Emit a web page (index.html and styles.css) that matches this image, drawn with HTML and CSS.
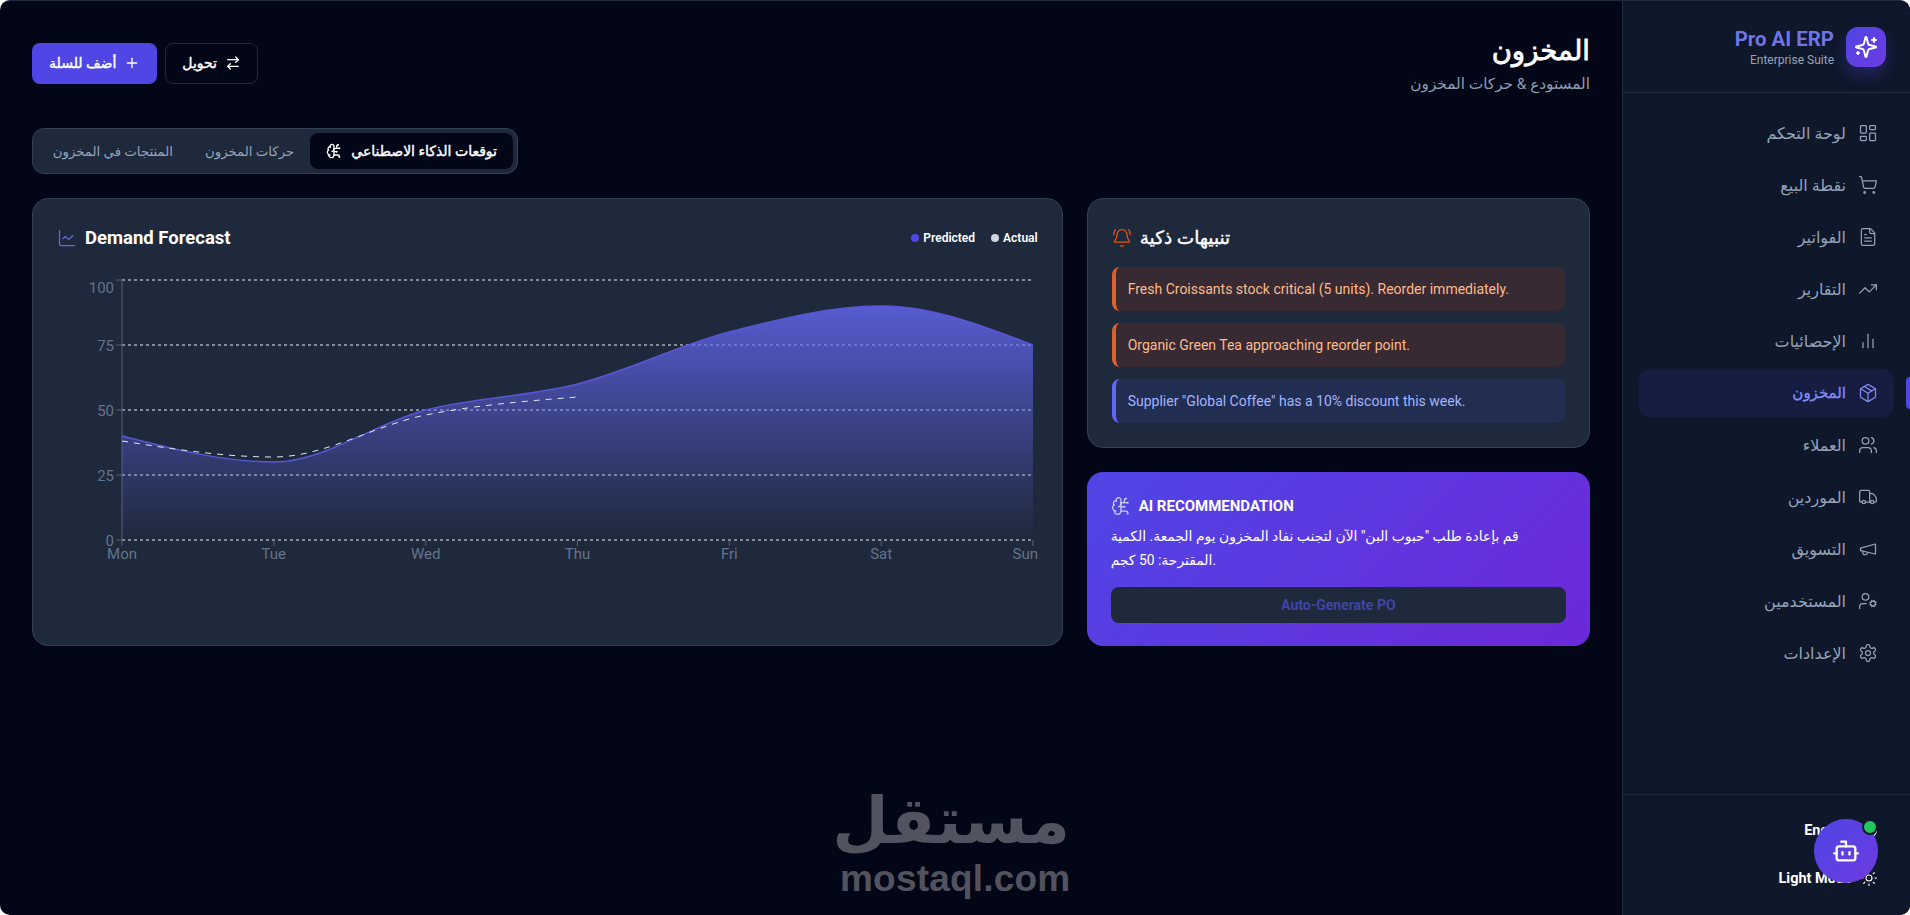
FILE: index.html
```html
<!DOCTYPE html>
<html lang="ar" dir="rtl">
<head>
  <meta charset="UTF-8" />
  <title>Pro AI ERP - المخزون</title>
  <link rel="stylesheet" href="styles.css">
</head>
<body>
  <svg class="sprite" xmlns="http://www.w3.org/2000/svg">
    <symbol id="i-dashboard" viewBox="0 0 24 24"><rect x="3" y="3" width="7" height="9" rx="1"/><rect x="14" y="3" width="7" height="5" rx="1"/><rect x="14" y="12" width="7" height="9" rx="1"/><rect x="3" y="16" width="7" height="5" rx="1"/></symbol>
    <symbol id="i-cart" viewBox="0 0 24 24"><circle cx="8" cy="21" r="1"/><circle cx="19" cy="21" r="1"/><path d="M2.05 2.05h2l2.66 12.42a2 2 0 0 0 2 1.58h9.78a2 2 0 0 0 1.95-1.57l1.65-7.43H5.12"/></symbol>
    <symbol id="i-file" viewBox="0 0 24 24"><path d="M15 2H6a2 2 0 0 0-2 2v16a2 2 0 0 0 2 2h12a2 2 0 0 0 2-2V7Z"/><path d="M14 2v4a2 2 0 0 0 2 2h4"/><path d="M10 9H8"/><path d="M16 13H8"/><path d="M16 17H8"/></symbol>
    <symbol id="i-trending" viewBox="0 0 24 24"><polyline points="22 7 13.5 15.5 8.5 10.5 2 17"/><polyline points="16 7 22 7 22 13"/></symbol>
    <symbol id="i-bars" viewBox="0 0 24 24"><path d="M18 20V10"/><path d="M12 20V4"/><path d="M6 20v-6"/></symbol>
    <symbol id="i-package" viewBox="0 0 24 24"><path d="M11 21.73a2 2 0 0 0 2 0l7-4A2 2 0 0 0 21 16V8a2 2 0 0 0-1-1.73l-7-4a2 2 0 0 0-2 0l-7 4A2 2 0 0 0 3 8v8a2 2 0 0 0 1 1.73z"/><path d="M12 22V12"/><path d="m3.3 7 7.703 4.734a2 2 0 0 0 1.994 0L20.7 7"/><path d="m7.5 4.27 9 5.15"/></symbol>
    <symbol id="i-users" viewBox="0 0 24 24"><path d="M16 21v-2a4 4 0 0 0-4-4H6a4 4 0 0 0-4 4v2"/><circle cx="9" cy="7" r="4"/><path d="M22 21v-2a4 4 0 0 0-3-3.87"/><path d="M16 3.13a4 4 0 0 1 0 7.75"/></symbol>
    <symbol id="i-truck" viewBox="0 0 24 24"><path d="M14 18V6a2 2 0 0 0-2-2H4a2 2 0 0 0-2 2v11a1 1 0 0 0 1 1h2"/><path d="M15 18H9"/><path d="M19 18h2a1 1 0 0 0 1-1v-3.65a1 1 0 0 0-.22-.624l-3.48-4.35A1 1 0 0 0 17.52 8H14"/><circle cx="17" cy="18" r="2"/><circle cx="7" cy="18" r="2"/></symbol>
    <symbol id="i-megaphone" viewBox="0 0 24 24"><path d="m3 11 18-5v12L3 14v-3z"/><path d="M11.6 16.8a3 3 0 1 1-5.8-1.6"/></symbol>
    <symbol id="i-usercog" viewBox="0 0 24 24"><circle cx="18" cy="15" r="3"/><circle cx="9" cy="7" r="4"/><path d="M10 15H6a4 4 0 0 0-4 4v2"/><path d="m21.7 16.4-.9-.3"/><path d="m15.2 13.9-.9-.3"/><path d="m16.6 18.7.3-.9"/><path d="m19.1 12.2.3-.9"/><path d="m19.6 18.7-.4-1"/><path d="m16.8 12.3-.4-1"/><path d="m14.3 16.6 1-.4"/><path d="m20.7 13.8 1-.4"/></symbol>
    <symbol id="i-settings" viewBox="0 0 24 24"><path d="M12.22 2h-.44a2 2 0 0 0-2 2v.18a2 2 0 0 1-1 1.73l-.43.25a2 2 0 0 1-2 0l-.15-.08a2 2 0 0 0-2.73.73l-.22.38a2 2 0 0 0 .73 2.73l.15.1a2 2 0 0 1 1 1.72v.51a2 2 0 0 1-1 1.74l-.15.09a2 2 0 0 0-.73 2.73l.22.38a2 2 0 0 0 2.73.73l.15-.08a2 2 0 0 1 2 0l.43.25a2 2 0 0 1 1 1.73V20a2 2 0 0 0 2 2h.44a2 2 0 0 0 2-2v-.18a2 2 0 0 1 1-1.73l.43-.25a2 2 0 0 1 2 0l.15.08a2 2 0 0 0 2.73-.73l.22-.39a2 2 0 0 0-.73-2.73l-.15-.08a2 2 0 0 1-1-1.74v-.5a2 2 0 0 1 1-1.74l.15-.09a2 2 0 0 0 .73-2.73l-.22-.38a2 2 0 0 0-2.73-.73l-.15.08a2 2 0 0 1-2 0l-.43-.25a2 2 0 0 1-1-1.73V4a2 2 0 0 0-2-2z"/><circle cx="12" cy="12" r="3"/></symbol>
    <symbol id="i-sparkles" viewBox="0 0 24 24"><path d="M9.937 15.5A2 2 0 0 0 8.5 14.063l-6.135-1.582a.5.5 0 0 1 0-.962L8.5 9.936A2 2 0 0 0 9.937 8.5l1.582-6.135a.5.5 0 0 1 .963 0L14.063 8.5A2 2 0 0 0 15.5 9.937l6.135 1.581a.5.5 0 0 1 0 .964L15.5 14.063a2 2 0 0 0-1.437 1.437l-1.582 6.135a.5.5 0 0 1-.963 0z"/><path d="M20 3v4"/><path d="M22 5h-4"/><path d="M4 17v2"/><path d="M5 18H3"/></symbol>
    <symbol id="i-transfer" viewBox="0 0 24 24"><path d="m16 3 4 4-4 4"/><path d="M20 7H4"/><path d="m8 21-4-4 4-4"/><path d="M4 17h16"/></symbol>
    <symbol id="i-plus" viewBox="0 0 24 24"><path d="M5 12h14"/><path d="M12 5v14"/></symbol>
    <symbol id="i-brain" viewBox="0 0 24 24"><path d="M12 5a3 3 0 1 0-5.997.125 4 4 0 0 0-2.526 5.77 4 4 0 0 0 .556 6.588A4 4 0 1 0 12 18Z"/><path d="M9 13a4.5 4.5 0 0 0 3-4"/><path d="M6.003 5.125A3 3 0 0 0 6.401 6.5"/><path d="M3.477 10.896a4 4 0 0 1 .585-.396"/><path d="M6 18a4 4 0 0 1-1.967-.516"/><path d="M12 13h4"/><path d="M12 18h6a2 2 0 0 1 2 2v1"/><path d="M12 8h8"/><path d="M16 8V5a2 2 0 0 1 2-2"/><circle cx="16" cy="13" r=".5"/><circle cx="18" cy="3" r=".5"/><circle cx="20" cy="21" r=".5"/><circle cx="20" cy="8" r=".5"/></symbol>
    <symbol id="i-chart" viewBox="0 0 24 24"><path d="M3 3v16a2 2 0 0 0 2 2h16"/><path d="m19 9-5 5-4-4-3 3"/></symbol>
    <symbol id="i-bell" viewBox="0 0 24 24"><path d="M10.268 21a2 2 0 0 0 3.464 0"/><path d="M22 8c0-2.3-.8-4.3-2-6"/><path d="M3.262 15.326A1 1 0 0 0 4 17h16a1 1 0 0 0 .74-1.673C19.41 13.956 18 12.499 18 8A6 6 0 0 0 6 8c0 4.499-1.411 5.956-2.738 7.326"/><path d="M4 2C2.8 3.7 2 5.7 2 8"/></symbol>
    <symbol id="i-bot" viewBox="0 0 24 24"><path d="M12 8V4H8"/><rect x="4" y="8" width="16" height="12" rx="2"/><path d="M2 14h2"/><path d="M20 14h2"/><path d="M15 13v2"/><path d="M9 13v2"/></symbol>
    <symbol id="i-sun" viewBox="0 0 24 24"><circle cx="12" cy="12" r="4"/><path d="M12 2v2"/><path d="M12 20v2"/><path d="m4.93 4.93 1.41 1.41"/><path d="m17.66 17.66 1.41 1.41"/><path d="M2 12h2"/><path d="M20 12h2"/><path d="m6.34 17.66-1.41 1.41"/><path d="m19.07 4.93-1.41 1.41"/></symbol>
    <symbol id="i-globe" viewBox="0 0 24 24"><circle cx="12" cy="12" r="10"/><path d="M12 2a14.5 14.5 0 0 0 0 20 14.5 14.5 0 0 0 0-20"/><path d="M2 12h20"/></symbol>
  </svg>

  <div class="app">
    <aside class="sidebar">
      <div class="brand">
        <div class="brand-logo"><svg class="icon icon-24"><use href="#i-sparkles"/></svg></div>
        <div class="brand-text">
          <div class="brand-name">Pro AI ERP</div>
          <div class="brand-sub">Enterprise Suite</div>
        </div>
      </div>
      <nav class="nav">
        <a class="nav-item"><svg class="icon icon-20"><use href="#i-dashboard"/></svg>لوحة التحكم</a>
        <a class="nav-item"><svg class="icon icon-20"><use href="#i-cart"/></svg>نقطة البيع</a>
        <a class="nav-item"><svg class="icon icon-20"><use href="#i-file"/></svg>الفواتير</a>
        <a class="nav-item"><svg class="icon icon-20"><use href="#i-trending"/></svg>التقارير</a>
        <a class="nav-item"><svg class="icon icon-20"><use href="#i-bars"/></svg>الإحصائيات</a>
        <a class="nav-item active"><svg class="icon icon-20"><use href="#i-package"/></svg>المخزون</a>
        <a class="nav-item"><svg class="icon icon-20"><use href="#i-users"/></svg>العملاء</a>
        <a class="nav-item"><svg class="icon icon-20"><use href="#i-truck"/></svg>الموردين</a>
        <a class="nav-item"><svg class="icon icon-20"><use href="#i-megaphone"/></svg>التسويق</a>
        <a class="nav-item"><svg class="icon icon-20"><use href="#i-usercog"/></svg>المستخدمين</a>
        <a class="nav-item"><svg class="icon icon-20"><use href="#i-settings"/></svg>الإعدادات</a>
      </nav>
      <div class="side-foot">
        <div class="foot-row"><svg class="icon icon-18"><use href="#i-globe"/></svg>English</div>
        <div class="foot-row"><svg class="icon icon-18"><use href="#i-sun"/></svg>Light Mode</div>
      </div>
    </aside>

    <main class="content">
      <header class="page-head">
        <div>
          <h1 class="page-title ar-bold">المخزون</h1>
          <p class="page-sub">المستودع &amp; حركات المخزون</p>
        </div>
        <div class="head-actions">
          <button class="btn btn-dark ar-bold"><svg class="icon icon-16"><use href="#i-transfer"/></svg>تحويل</button>
          <button class="btn btn-primary ar-bold"><svg class="icon icon-16"><use href="#i-plus"/></svg>أضف للسلة</button>
        </div>
      </header>

      <div class="tabs">
        <div class="tab tab-active ar-bold">توقعات الذكاء الاصطناعي<svg class="icon icon-16"><use href="#i-brain"/></svg></div>
        <div class="tab">حركات المخزون</div>
        <div class="tab">المنتجات في المخزون</div>
      </div>

      <div class="grid" dir="ltr">
        <section class="card chart-card">
          <div class="chart-head">
            <h2 class="card-title"><svg class="icon icon-20 c-indigo"><use href="#i-chart"/></svg>Demand Forecast</h2>
            <div class="legend">
              <span class="legend-item"><i class="dot dot-pred"></i>Predicted</span>
              <span class="legend-item"><i class="dot dot-act"></i>Actual</span>
            </div>
          </div>
          <svg class="chart" viewBox="0 0 1030 340" width="1030" height="340">
            <defs>
              <linearGradient id="areaFill" x1="0" y1="0" x2="0" y2="1">
                <stop offset="0" stop-color="#6366f1" stop-opacity=".82"/>
                <stop offset="1" stop-color="#6366f1" stop-opacity="0"/>
              </linearGradient>
            </defs>
            <g transform="translate(-32 -260)">
              <g class="grid-lines">
                <path d="M122 280H1033"/><path d="M122 345H1033"/><path d="M122 410H1033"/><path d="M122 475H1033"/><path d="M122 540H1033"/>
              </g>
              <g class="axis">
                <path d="M122 280V540"/>
                <path d="M116 280h6M116 345h6M116 410h6M116 475h6M116 540h6"/>
                <path d="M122 540v6M273.8 540v6M425.7 540v6M577.5 540v6M729.3 540v6M881.2 540v6M1033 540v6"/>
              </g>
              <g class="tick-y">
                <text x="114" y="293">100</text><text x="114" y="351">75</text><text x="114" y="416">50</text><text x="114" y="481">25</text><text x="114" y="546">0</text>
              </g>
              <g class="tick-x">
                <text x="122" y="559">Mon</text><text x="273.8" y="559">Tue</text><text x="425.7" y="559">Wed</text><text x="577.5" y="559">Thu</text><text x="729.3" y="559">Fri</text><text x="881.2" y="559">Sat</text><text x="1038" y="559" class="tick-end">Sun</text>
              </g>
              <path class="area" d="M122 436C172.6 449 223.2 462 273.8 462C324.4 462 375.1 423 425.7 410C476.3 397 526.9 397 577.5 384C628.1 371 678.7 345 729.3 332C779.9 319 830.6 306 881.2 306C931.8 306 982.4 325.5 1033 345V540H122Z"/>
              <path class="line-pred" d="M122 436C172.6 449 223.2 462 273.8 462C324.4 462 375.1 423 425.7 410C476.3 397 526.9 397 577.5 384C628.1 371 678.7 345 729.3 332C779.9 319 830.6 306 881.2 306C931.8 306 982.4 325.5 1033 345"/>
              <path class="line-act" d="M122 441C172.6 449 223.2 457 273.8 457C324.4 457 375.1 425 425.7 415C476.3 405 526.9 401 577.5 397"/>
            </g>
          </svg>
        </section>

        <div class="side-col">
          <section class="card alerts-card">
            <h2 class="card-title"><svg class="icon icon-20 c-orange"><use href="#i-bell"/></svg><span class="ar-bold">تنبيهات ذكية</span></h2>
            <div class="alerts">
              <div class="alert alert-orange">Fresh Croissants stock critical (5 units). Reorder immediately.</div>
              <div class="alert alert-orange">Organic Green Tea approaching reorder point.</div>
              <div class="alert alert-blue">Supplier "Global Coffee" has a 10% discount this week.</div>
            </div>
          </section>
          <section class="ai-card">
            <h3 class="ai-title"><svg class="icon icon-20"><use href="#i-brain"/></svg>AI RECOMMENDATION</h3>
            <p class="ai-text">قم بإعادة طلب "حبوب البن" الآن لتجنب نفاد المخزون يوم الجمعة. الكمية المقترحة: 50 كجم.</p>
            <button class="ai-btn">Auto-Generate PO</button>
          </section>
        </div>
      </div>
    </main>

    <div class="watermark" dir="rtl">
      <div class="wm-ar">مستقل</div>
      <div class="wm-en" dir="ltr">mostaql.com</div>
    </div>

    <button class="fab"><svg class="icon icon-28"><use href="#i-bot"/></svg><i class="fab-dot"></i></button>
  </div>
</body>
</html>
```

FILE: styles.css
```css
* {
  box-sizing: border-box;
}
html, body {
  margin: 0;
  height: 100%;
}
body {
  background: #fff;
  font-family: Roboto, "DejaVu Sans", sans-serif;
  color: #fff;
  overflow: hidden;
}
.sprite {
  display: none;
}
.icon {
  fill: none;
  stroke: currentColor;
  stroke-width: 2;
  stroke-linecap: round;
  stroke-linejoin: round;
  flex: none;
}
.icon-16 { width: 16px; height: 16px; }
.icon-18 { width: 18px; height: 18px; stroke-width: 1.5; }
.icon-20 { width: 20px; height: 20px; stroke-width: 1.5; }
.icon-24 { width: 24px; height: 24px; }
.icon-28 { width: 28px; height: 28px; }
.c-indigo { color: #6366f1; }
.c-orange { color: #ea580c; }
/* the arabic bold face runs too wide, so thicken the regular one */
.ar-bold {
  font-weight: 400;
  -webkit-text-stroke: .4px currentColor;
}

.app {
  position: relative;
  height: 915px;
  display: flex;
  background: #020617;
  border-top: 1px solid #1e293b;
  border-radius: 10px;
  overflow: hidden;
}

/* sidebar */
.sidebar {
  width: 288px;
  flex: none;
  background: #0f172a;
  border-left: 1px solid #1e293b;
  display: flex;
  flex-direction: column;
}
.brand {
  height: 92px;
  padding: 0 24px;
  display: flex;
  align-items: center;
  gap: 12px;
  border-bottom: 1px solid #1e293b;
}
.brand-logo {
  width: 40px;
  height: 40px;
  border-radius: 12px;
  background: linear-gradient(135deg, #4f46e5, #6d3ae0);
  box-shadow: 0 8px 16px rgba(79, 70, 229, .3);
  display: flex;
  align-items: center;
  justify-content: center;
}
.brand-text {
  direction: ltr;
  text-align: right;
}
.brand-name {
  font-size: 20.4px;
  font-weight: 700;
  line-height: 26px;
  color: #6f74e6;
}
.brand-sub {
  font-size: 12px;
  line-height: 16px;
  color: #94a3b8;
}
.nav {
  flex: 1;
  padding: 16px;
  display: flex;
  flex-direction: column;
  gap: 4px;
}
.nav-item {
  position: relative;
  height: 48px;
  padding: 0 16px;
  display: flex;
  align-items: center;
  gap: 12px;
  border-radius: 12px;
  color: #94a3b8;
  font-size: 16px;
}
.nav-item.active {
  background: rgba(79, 70, 229, .12);
  color: #818cf8;
  font-size: 15px;
  -webkit-text-stroke: .35px currentColor;
}
.nav-item.active::before {
  content: "";
  position: absolute;
  right: -16px;
  top: 8px;
  bottom: 8px;
  width: 4px;
  border-radius: 4px 0 0 4px;
  background: #4f46e5;
}
.side-foot {
  height: 121px;
  padding: 23px 32px 0;
  border-top: 1px solid #1e293b;
  display: flex;
  flex-direction: column;
  gap: 24px;
}
.foot-row {
  height: 24px;
  display: flex;
  align-items: center;
  gap: 8px;
  font-size: 14.5px;
  font-weight: 700;
}

/* main */
.content {
  flex: 1;
  padding: 32px;
  min-width: 0;
}
.page-head {
  display: flex;
  justify-content: space-between;
  align-items: center;
  margin-bottom: 35px;
}
.page-title {
  margin: 0;
  font-size: 27.5px;
  line-height: 36px;
  -webkit-text-stroke: .8px currentColor;
}
.page-sub {
  margin: 3px 0 -3px;
  font-size: 15.3px;
  line-height: 24px;
  color: #8c9bb1;
}
.head-actions {
  display: flex;
  gap: 8px;
}
.btn {
  height: 41px;
  padding: 0 16px;
  display: flex;
  align-items: center;
  gap: 8px;
  border-radius: 8px;
  font-family: inherit;
  font-size: 14px;
  color: #fff;
}
.btn-dark {
  background: #020617;
  border: 1px solid #1e293b;
}
.btn-primary {
  background: #4f46e5;
  padding: 0 17px;
  border: 0;
}
.tabs {
  width: 486px;
  height: 46px;
  margin-right: auto;
  padding: 4px;
  display: flex;
  background: #1e293b;
  border: 1px solid #334155;
  border-radius: 12px;
}
.tab {
  padding: 0 16px;
  display: flex;
  align-items: center;
  gap: 8px;
  border-radius: 8px;
  font-size: 13.3px;
  white-space: nowrap;
  color: #94a3b8;
}
.tab-active {
  background: #020617;
  color: #fff;
  gap: 9px;
  font-size: 14px;
}
.grid {
  margin-top: 24px;
  display: grid;
  grid-template-columns: repeat(3, 1fr);
  gap: 24px;
}
.card {
  background: #1e293b;
  border: 1px solid #334155;
  border-radius: 16px;
}
.chart-card {
  grid-column: span 2;
  height: 448px;
  padding: 24px;
  position: relative;
}
.chart-head {
  display: flex;
  align-items: center;
  justify-content: space-between;
}
.card-title {
  margin: 0;
  display: flex;
  align-items: center;
  gap: 8px;
  font-size: 18.5px;
  line-height: 30px;
  font-weight: 700;
}
.legend {
  display: flex;
  gap: 16px;
  font-size: 12px;
  font-weight: 600;
}
.legend-item {
  display: flex;
  align-items: center;
  gap: 4px;
}
.dot {
  width: 8px;
  height: 8px;
  border-radius: 50%;
}
.dot-pred { background: #4f46e5; }
.dot-act { background: #cbd5e1; }
.chart {
  position: absolute;
  left: -1px;
  top: 61px;
}
.grid-lines path {
  stroke: #a8adb8;
  stroke-width: 1.5;
  stroke-dasharray: 3 3;
  fill: none;
}
.axis path {
  stroke: #566277;
  stroke-width: 1;
  fill: none;
}
.tick-y text, .tick-x text {
  fill: #64748b;
  font-size: 15px;
}
.tick-y text { text-anchor: end; }
.tick-x text { text-anchor: middle; }
.tick-x .tick-end { text-anchor: end; }
.area { fill: url(#areaFill); }
.line-pred {
  fill: none;
  stroke: #5a56d6;
  stroke-width: 1.5;
}
.line-act {
  fill: none;
  stroke: #e2e8f0;
  stroke-width: 1;
  stroke-dasharray: 6 6;
}

.side-col {
  display: flex;
  flex-direction: column;
  gap: 24px;
}
.alerts-card {
  height: 250px;
  padding: 24px;
}
.alerts {
  margin-top: 14px;
  display: flex;
  flex-direction: column;
  gap: 12px;
}
.alert {
  height: 44px;
  padding: 0 12px;
  display: flex;
  align-items: center;
  border-left: 4px solid;
  border-radius: 8px;
  font-size: 14px;
}
.alert-orange {
  background: #382a33;
  border-color: #d9622f;
  color: #fdba8c;
}
.alert-blue {
  background: #212e52;
  border-color: #6366f1;
  color: #a5b4fc;
}
.ai-card {
  height: 174px;
  padding: 24px;
  border-radius: 16px;
  background: linear-gradient(135deg, #4f46e5, #6d28d9);
}
.ai-title {
  margin: 0 0 8px;
  display: flex;
  align-items: center;
  gap: 8px;
  font-size: 15px;
  line-height: 20px;
  font-weight: 700;
}
.ai-title .icon { color: #c7d2fe; }
.ai-text {
  margin: 0 0 15px;
  font-size: 13.9px;
  line-height: 24px;
}
.ai-btn {
  width: 100%;
  height: 36px;
  border: 0;
  border-radius: 8px;
  background: #1e293b;
  color: #3f45a6;
  font-family: inherit;
  font-size: 14px;
  font-weight: 700;
}

/* overlays */
.watermark {
  position: absolute;
  left: 840px;
  top: 782px;
  width: 230px;
  text-align: center;
  color: #52535f;
  pointer-events: none;
}
.wm-ar {
  font-family: "DejaVu Sans", sans-serif;
  font-size: 65px;
  line-height: 76px;
  font-weight: 700;
}
.wm-en {
  font-family: "Liberation Sans", sans-serif;
  font-size: 37px;
  line-height: 40px;
  font-weight: 700;
  letter-spacing: .2px;
}
.fab {
  position: absolute;
  right: 32px;
  bottom: 32px;
  width: 64px;
  height: 64px;
  border: 0;
  border-radius: 50%;
  background: linear-gradient(135deg, #4f46e5, #6d3ae0);
  color: #fff;
  display: flex;
  align-items: center;
  justify-content: center;
}
.fab-dot {
  position: absolute;
  top: 0;
  right: 0;
  width: 16px;
  height: 16px;
  border-radius: 50%;
  background: #22c55e;
  border: 2px solid #0f172a;
}
```
